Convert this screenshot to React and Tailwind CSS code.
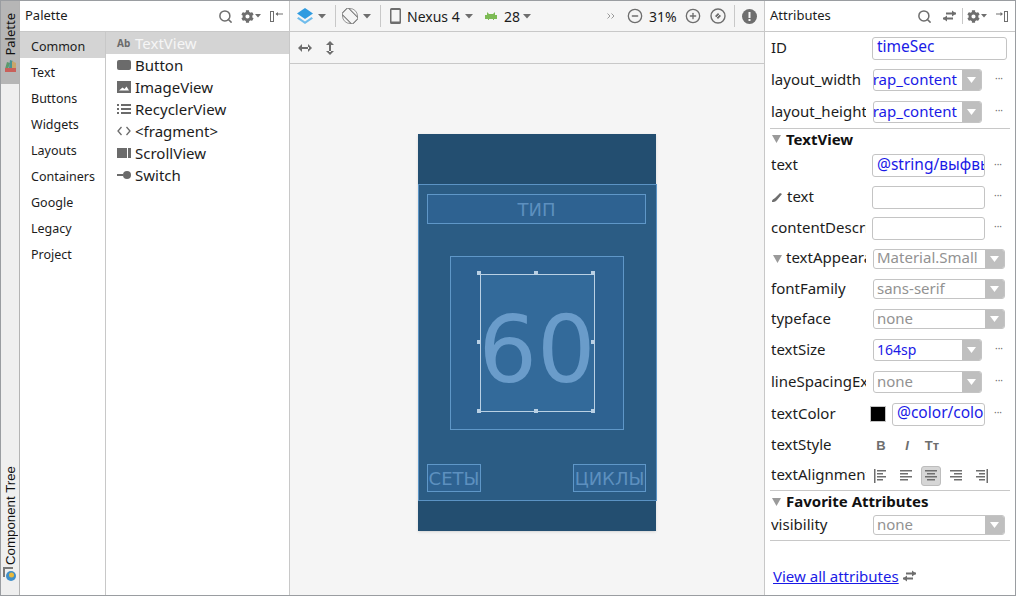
import React from 'react';
import { FaCog } from 'react-icons/fa';
import { Search, CircleMinus, CirclePlus } from 'lucide-react';

const ui = { fontFamily: '"Noto Sans", sans-serif' };

function Caret({ className = '' }) {
  return (
    <svg width="8" height="5" viewBox="0 0 8 5" className={className}>
      <path d="M0 0h8L4 4.500z" fill="#6e6e6e" />
    </svg>
  );
}

function Gear() {
  return (
    <span className="flex items-center gap-[1px]">
      <FaCog size={13} color="#6e6e6e" />
      <svg width="6" height="4" viewBox="0 0 6 4"><path d="M0 0h6L3 3.500z" fill="#6e6e6e" /></svg>
    </span>
  );
}

function SwapIcon() {
  return (
    <svg width="15" height="12" viewBox="0 0 15 12" fill="none" stroke="#6e6e6e" strokeWidth="2">
      <path d="M4 3.500h10M1 8.500h10" />
      <path d="M10 0.500v6l4-3zM5 5.500v6l-4-3z" fill="#6e6e6e" stroke="none" />
    </svg>
  );
}

function CategoryRow({ label, active }) {
  return (
    <div className={`h-[26px] pl-[11px] pt-[4px] flex items-center text-[12.5px] text-[#1c1c1c] ${active ? 'bg-[#d4d4d4]' : ''}`}>
      {label}
    </div>
  );
}

function PaletteIcon({ name }) {
  const fill = '#6b6b6b';
  if (name === 'text') return <span className="text-[10px] font-bold text-[#6b6b6b]">Ab</span>;
  if (name === 'button') return <svg width="14" height="11" viewBox="0 0 14 11"><rect width="14" height="10" rx="2" fill={fill} /></svg>;
  if (name === 'image') {
    return (
      <svg width="14" height="12" viewBox="0 0 14 12">
        <path fillRule="evenodd" d="M0 0h14v12H0zM2 9.500h10L9.500 5.500 7.500 8 5.500 6.500z" fill={fill} />
      </svg>
    );
  }
  if (name === 'list') {
    return (
      <svg width="14" height="10" viewBox="0 0 14 10" fill={fill}>
        <path d="M0 0h2v2H0zM4 0h10v2H4zM0 4h2v2H0zM4 4h10v2H4zM0 8h2v2H0zM4 8h10v2H4z" />
      </svg>
    );
  }
  if (name === 'code') {
    return (
      <svg width="14" height="10" viewBox="0 0 14 10" fill="none" stroke={fill} strokeWidth="1.300">
        <path d="M4.500 1 1 5l3.500 4M9.500 1 13 5 9.500 9" />
      </svg>
    );
  }
  if (name === 'scroll') {
    return (
      <svg width="14" height="10" viewBox="0 0 14 10" fill={fill}>
        <path d="M0 0h10v10H0zM11 0h3v10h-3z" />
      </svg>
    );
  }
  return (
    <svg width="14" height="8" viewBox="0 0 14 8" fill={fill}>
      <rect x="0" y="3" width="6" height="2" />
      <circle cx="10" cy="4" r="4" />
    </svg>
  );
}

function ItemRow({ icon, label, active }) {
  return (
    <div className={`h-[22px] flex items-center text-[15px] ${active ? 'bg-[#d4d4d4] text-[#f6f6f6]' : 'text-[#1c1c1c]'}`}>
      <span className="w-[29px] pl-[11px] flex items-center">
        <PaletteIcon name={icon} />
      </span>
      {label}
    </div>
  );
}

function LeftRail() {
  return (
    <div className="w-[19px] shrink-0 bg-[#efefef] border-r border-[#b4b4b4] flex flex-col justify-between">
      <div className="h-[83px] bg-[#b6b6b6] flex flex-col-reverse items-center justify-end pb-[11px]">
        <div className="flex flex-col-reverse items-center gap-[3px] h-full justify-start">
          <svg width="13" height="14" viewBox="0 0 13 14">
            <path d="M1 10 3 3l3 1-2 6z" fill="#5b9a6c" />
            <path d="M5 9 6 1l3 1 1 7z" fill="#3d8f8f" opacity="0.9" />
            <path d="M8 9V2l4 2v5z" fill="#c9a66b" />
            <rect x="1" y="9" width="11" height="4" fill="#c9605a" />
          </svg>
          <span className="[writing-mode:vertical-rl] rotate-180 text-[13px] text-[#111] leading-[19px]">Palette</span>
        </div>
      </div>
      <div className="flex flex-col items-center pb-[14px]">
        <span className="[writing-mode:vertical-rl] rotate-180 text-[13.300px] text-[#111] leading-[19px]" style={{ fontFamily: '"Liberation Sans", sans-serif' }}>
          Component Tree
        </span>
        <svg width="14" height="14" viewBox="0 0 14 14" className="mt-[2px]">
          <path d="M0 0h10v2H2v8H0z" fill="#7a7a7a" />
          <circle cx="8" cy="9" r="5" fill="#3f8fc9" />
          <circle cx="8.500" cy="8" r="2.500" fill="#e8b93c" />
        </svg>
      </div>
    </div>
  );
}

function PalettePanel() {
  const cats = ['Common', 'Text', 'Buttons', 'Widgets', 'Layouts', 'Containers', 'Google', 'Legacy', 'Project'];
  const items = [
    ['text', 'TextView'],
    ['button', 'Button'],
    ['image', 'ImageView'],
    ['list', 'RecyclerView'],
    ['code', '<fragment>'],
    ['scroll', 'ScrollView'],
    ['switch', 'Switch'],
  ];
  return (
    <div className="w-[270px] shrink-0 bg-white border-r border-[#c8c8c8] flex flex-col">
      <div className="h-[31px] shrink-0 border-b border-[#c8c8c8] flex items-center pl-[5px] text-[13px] text-[#1c1c1c]">
        <span>Palette</span>
        <span className="ml-auto flex items-center">
          <Search size={15} color="#6e6e6e" strokeWidth={2.400} />
          <span className="ml-[8px]"><Gear /></span>
          <svg width="13" height="13" viewBox="0 0 13 13" className="ml-[9px] mr-[6px]">
            <path d="M0 1h4v11H0zM1 2v9h2V2z" fill="#6e6e6e" />
            <path d="M6 3.500h7v1H6z" fill="#6e6e6e" />
            <path d="M5.500 4 8 2v4z" fill="#6e6e6e" />
          </svg>
        </span>
      </div>
      <div className="flex flex-1">
        <div className="w-[86px] border-r border-[#c8c8c8]">
          {cats.map((c, i) => <CategoryRow key={c} label={c} active={i === 0} />)}
        </div>
        <div className="flex-1">
          {items.map(([ic, l], i) => <ItemRow key={l} icon={ic} label={l} active={i === 0} />)}
        </div>
      </div>
    </div>
  );
}

function Sep({ className = '' }) {
  return <span className={`w-px h-[22px] bg-[#c8c8c8] ${className}`} />;
}

function Toolbar() {
  return (
    <div className="h-[31px] shrink-0 border-b border-[#c8c8c8] flex items-center text-[14px] text-[#1c1c1c] pl-[7px]">
      <svg width="16" height="16" viewBox="0 0 16 16">
        <path d="M8 0l8 5.500-8 5.500-8-5.500z" fill="#2f9be0" />
        <path d="M1.500 9 8 13.500 14.500 9 16 10.500 8 16 0 10.500z" fill="#6fbcec" />
      </svg>
      <Caret className="ml-[5px]" />
      <Sep className="ml-[9px]" />
      <svg width="16" height="16" viewBox="0 0 16 16" fill="none" stroke="#6e6e6e" className="ml-[6px]">
        <circle cx="8" cy="8" r="7.500" strokeWidth="0.700" />
        <rect x="3.500" y="0.500" width="9" height="15" rx="1" transform="rotate(-45 8 8)" fill="#f5f5f5" strokeWidth="1" />
      </svg>
      <Caret className="ml-[5px]" />
      <Sep className="ml-[9px]" />
      <svg width="11" height="16" viewBox="0 0 11 16" className="ml-[9px]">
        <path fillRule="evenodd" d="M1.500 0h8A1.500 1.500 0 0 1 11 1.500v13A1.500 1.500 0 0 1 9.500 16h-8A1.500 1.500 0 0 1 0 14.500v-13A1.500 1.500 0 0 1 1.500 0zM1.500 2v11.500h8V2z" fill="#6e6e6e" />
      </svg>
      <span className="ml-[6px] w-[54px]">Nexus 4</span>
      <Caret className="ml-[4px]" />
      <svg width="12" height="8" viewBox="0 0 12 8" className="ml-[12px]">
        <path d="M0 3h12v4H9v1H8V7H4v1H3V7H0zM2 0l2 2h4l2-2v3H2z" fill="#7dbb55" />
      </svg>
      <span className="ml-[7px] w-[15px]">28</span>
      <Caret className="ml-[4px]" />
      <svg width="8" height="6" viewBox="0 0 8 6" fill="none" stroke="#9a9a9a" className="ml-[76px]">
        <path d="M0.500 0.500 3 3 0.500 5.500M4.500 0.500 7 3 4.500 5.500" />
      </svg>
      <CircleMinus size={16} color="#6e6e6e" strokeWidth={2} className="ml-[12px]" />
      <span className="ml-[6px] w-[29px]">31%</span>
      <CirclePlus size={16} color="#6e6e6e" strokeWidth={2} className="ml-[7px]" />
      <svg width="16" height="16" viewBox="0 0 16 16" className="ml-[9px]" fill="none">
        <circle cx="8" cy="8" r="7" stroke="#6e6e6e" strokeWidth="1.400" />
        <path d="M5 8 8 5l3 3-3 3z" fill="#6e6e6e" />
        <path d="M6 10 10 6" stroke="#f5f5f5" strokeWidth="0.800" />
      </svg>
      <Sep className="ml-[8px]" />
      <svg width="15" height="15" viewBox="0 0 15 15" className="ml-[7px]">
        <circle cx="7.500" cy="7.500" r="7.500" fill="#6e6e6e" />
        <path d="M6.500 3h2v6h-2zM6.500 10h2v2h-2z" fill="#f5f5f5" />
      </svg>
    </div>
  );
}

function Handle({ className }) {
  return <span className={`absolute w-[4px] h-[4px] bg-[#b9d0e4] ${className}`} />;
}

function Device() {
  const android = { fontFamily: '"DejaVu Sans", sans-serif' };
  return (
    <div className="w-[238px] h-[397px] flex flex-col shadow-sm" style={android}>
      <div className="h-[50px] bg-[#234e70]" />
      <div className="w-[239px] h-[317px] bg-[#2b5c84] border border-[#5b93c4] pt-[9px] pl-[8px] pr-[10px]">
        <div className="h-[30px] bg-[#2e6291] border border-[#5f97c8] flex items-center justify-center text-[18px] text-[#5d90bf]">
          ТИП
        </div>
        <div className="mt-[32px] ml-[23px] w-[174px] h-[174px] bg-[#2e6291] border border-[#5f97c8] flex items-center justify-center">
          <div className="relative w-[115px] h-[138px] pt-[16px] bg-[#336a9a] border border-[#b9d0e4] flex items-center justify-center text-[92px] leading-none text-[#6a9cca]">
            60
            <Handle className="left-[-4px] top-[-4px]" />
            <Handle className="left-[53px] top-[-4px]" />
            <Handle className="left-[110px] top-[-4px]" />
            <Handle className="left-[-4px] top-[65px]" />
            <Handle className="left-[110px] top-[65px]" />
            <Handle className="left-[-4px] top-[134px]" />
            <Handle className="left-[53px] top-[134px]" />
            <Handle className="left-[110px] top-[134px]" />
          </div>
        </div>
        <div className="mt-[34px] flex justify-between text-[18px] text-[#5d90bf]">
          <div className="w-[54px] h-[28px] bg-[#2e6291] border border-[#5f97c8] flex items-center justify-center">СЕТЫ</div>
          <div className="w-[73px] h-[28px] bg-[#2e6291] border border-[#5f97c8] flex items-center justify-center">ЦИКЛЫ</div>
        </div>
      </div>
      <div className="h-[30px] bg-[#234e70]" />
    </div>
  );
}

function CenterPanel() {
  return (
    <div className="w-[475px] shrink-0 bg-[#f5f5f5] border-r border-[#c8c8c8] flex flex-col">
      <Toolbar />
      <div className="h-[32px] shrink-0 border-b border-[#c8c8c8] flex items-center pl-[8px]">
        <svg width="14" height="8" viewBox="0 0 14 8">
          <path d="M3 3h8v2H3zM0 4l4-4v8zM14 4l-4-4v8z" fill="#6e6e6e" />
        </svg>
        <svg width="8" height="14" viewBox="0 0 8 14" className="ml-[14px]">
          <path d="M3 3h2v8H3zM4 0l4 4H0zM4 14l4-4H0z" fill="#6e6e6e" />
        </svg>
      </div>
      <div className="flex-1 pt-[70px] pl-[128px]">
        <Device />
      </div>
    </div>
  );
}

function Dots({ className = '' }) {
  return <span className={`text-[10px] leading-none text-[#6e6e6e] -mt-[4px] ${className}`}>···</span>;
}

function Row({ h, label, children }) {
  return (
    <div className={`${h} flex items-center pl-[6px]`}>
      <div className="w-[101px] shrink-0 flex items-center pb-[2px] text-[15px] text-[#1c1c1c]">
        {label}
      </div>
      <div className="flex items-center flex-1">{children}</div>
    </div>
  );
}

function Label({ text }) {
  return <span className="block w-[95px] overflow-hidden whitespace-nowrap">{text}</span>;
}

function Field({ w, value, h = 'h-[23px]' }) {
  return (
    <div className={`${w} ${h} border border-[#c4c4c4] rounded-[3px] bg-white pl-[4px] pr-px flex items-center overflow-hidden whitespace-nowrap text-[15.500px] text-[#1a1ae6]`}>
      <span className="pb-[2px]">{value}</span>
    </div>
  );
}

function Select({ w, h, value, blue, clip, small }) {
  return (
    <div className={`${w} ${h} ml-px border border-[#c4c4c4] rounded-[3px] bg-white flex items-stretch overflow-hidden ${small ? 'text-[14px]' : 'text-[15px]'} ${blue ? 'text-[#1a1ae6]' : 'text-[#929292]'}`}>
      <div className={`flex-1 min-w-0 overflow-hidden whitespace-nowrap flex items-center pb-[2px] ${clip ? 'justify-end pr-[5px]' : 'pl-[3px]'}`}>
        {value}
      </div>
      <div className="w-[19px] shrink-0 bg-[#bfbfbf] flex items-center justify-center">
        <svg width="9" height="6" viewBox="0 0 9 6"><path d="M0 0h9L4.500 6z" fill="#fff" /></svg>
      </div>
    </div>
  );
}

function Section({ h, title }) {
  return (
    <div className={`${h} flex items-center pl-[7px] pb-[1px] text-[15px] font-bold text-[#111]`}>
      <svg width="9" height="8" viewBox="0 0 9 8" className="mr-[5px]"><path d="M0 0h9L4.500 8z" fill="#9a9a9a" /></svg>
      {title}
    </div>
  );
}

function AlignIcon({ lines, bar }) {
  return (
    <svg width="12" height="14" viewBox="0 0 12 14" fill="#6e6e6e">
      {lines.map(([x, w], i) => <rect key={i} x={x} y={i * 3 + 1} width={w} height="1.500" />)}
      {bar === 'l' && <rect x="0" y="0" width="1.500" height="14" />}
      {bar === 'r' && <rect x="10.500" y="0" width="1.500" height="14" />}
    </svg>
  );
}

function AttributesPanel() {
  return (
    <div className="flex-1 bg-white flex flex-col">
      <div className="h-[31px] shrink-0 border-b border-[#c8c8c8] flex items-center pl-[5px] text-[13px] text-[#1c1c1c]">
        <span>Attributes</span>
        <span className="ml-auto flex items-center">
          <Search size={15} color="#6e6e6e" strokeWidth={2.400} />
          <span className="ml-[10px]"><SwapIcon /></span>
          <span className="w-px h-[16px] bg-[#c8c8c8] ml-[5px]" />
          <span className="ml-[4px]"><Gear /></span>
          <svg width="12" height="13" viewBox="0 0 12 13" className="ml-[9px] mr-[7px]">
            <path d="M8 1h4v11H8zM9 2v9h2V2z" fill="#6e6e6e" />
            <path d="M0 3.500h6v1H0z" fill="#6e6e6e" />
            <path d="M7 4 4.500 2v4z" fill="#6e6e6e" />
          </svg>
        </span>
      </div>

      <Row h="h-[32px]" label={<Label text="ID" />}>
        <Field w="w-[135px]" value="timeSec" />
      </Row>
      <Row h="h-[32px]" label={<Label text="layout_width" />}>
        <Select w="w-[109px]" h="h-[22px]" value="wrap_content" blue clip />
        <Dots className="ml-[13px]" />
      </Row>
      <Row h="h-[32px]" label={<Label text="layout_height" />}>
        <Select w="w-[109px]" h="h-[22px]" value="wrap_content" blue clip />
        <Dots className="ml-[13px]" />
      </Row>
      <div className="h-px mx-[5px] bg-[#c8c8c8]" />
      <Section h="h-[21px]" title="TextView" />
      <Row h="h-[31px]" label={<Label text="text" />}>
        <Field w="w-[113px]" value="@string/выфвыф" />
        <Dots className="ml-[9px]" />
      </Row>
      <Row
        h="h-[32px]"
        label={
          <span className="flex items-center">
            <svg width="11" height="10" viewBox="0 0 11 10" className="ml-px mr-[4px] mt-[2px]"><path d="M0 10c0-3 2-3 3-4l5-5 2 1-5 6c-2 2-3 2-5 2z" fill="#6e6e6e" /></svg>
            text
          </span>
        }
      >
        <Field w="w-[113px]" value="" />
        <Dots className="ml-[9px]" />
      </Row>
      <Row h="h-[30px]" label={<Label text="contentDescription" />}>
        <Field w="w-[113px]" value="" />
        <Dots className="ml-[9px]" />
      </Row>
      <Row
        h="h-[31px]"
        label={
          <span className="flex items-center w-[95px] overflow-hidden whitespace-nowrap">
            <svg width="9" height="8" viewBox="0 0 9 8" className="ml-[2px] mr-[4px] mt-[2px] shrink-0"><path d="M0 0h9L4.500 8z" fill="#9a9a9a" /></svg>
            textAppearance
          </span>
        }
      >
        <Select w="w-[132px]" h="h-[20px]" value="Material.Small" />
      </Row>
      <Row h="h-[30px]" label={<Label text="fontFamily" />}>
        <Select w="w-[132px]" h="h-[20px]" value="sans-serif" />
      </Row>
      <Row h="h-[30px]" label={<Label text="typeface" />}>
        <Select w="w-[132px]" h="h-[20px]" value="none" />
      </Row>
      <Row h="h-[32px]" label={<Label text="textSize" />}>
        <Select w="w-[109px]" h="h-[22px]" value="164sp" blue small />
        <Dots className="ml-[13px]" />
      </Row>
      <Row h="h-[32px]" label={<Label text="lineSpacingExtra" />}>
        <Select w="w-[109px]" h="h-[22px]" value="none" />
        <Dots className="ml-[13px]" />
      </Row>
      <Row h="h-[32px]" label={<Label text="textColor" />}>
        <span className="w-[16px] h-[16px] bg-black border border-[#c4c4c4] -ml-[2px] mr-[6px]" />
        <Field w="w-[93px]" value="@color/colorAccent" />
        <Dots className="ml-[9px]" />
      </Row>
      <Row h="h-[31px]" label={<Label text="textStyle" />}>
        <span className="w-[16px] ml-[1px] text-center text-[13px] font-bold text-[#6e6e6e]" style={{ fontFamily: '"Liberation Sans", sans-serif' }}>B</span>
        <span className="w-[16px] ml-[10px] text-center text-[13px] font-bold italic text-[#6e6e6e]" style={{ fontFamily: '"Liberation Sans", sans-serif' }}>I</span>
        <span className="w-[16px] ml-[9px] text-center text-[13px] font-bold text-[#6e6e6e]" style={{ fontFamily: '"Liberation Sans", sans-serif' }}>Tт</span>
      </Row>
      <Row h="h-[29px]" label={<Label text="textAlignment" />}>
        <span className="ml-[2px]"><AlignIcon lines={[[3, 9], [3, 6], [3, 9], [3, 6]]} bar="l" /></span>
        <span className="ml-[14px]"><AlignIcon lines={[[0, 12], [0, 8], [0, 12], [0, 8]]} /></span>
        <span className="ml-[9px] w-[20px] h-[20px] bg-[#d6d6d6] border border-[#bdbdbd] rounded-[3px] flex items-center justify-center">
          <AlignIcon lines={[[0, 12], [2, 8], [0, 12], [2, 8]]} />
        </span>
        <span className="ml-[9px]"><AlignIcon lines={[[0, 12], [4, 8], [0, 12], [4, 8]]} /></span>
        <span className="ml-[14px]"><AlignIcon lines={[[0, 9], [3, 6], [0, 9], [3, 6]]} bar="r" /></span>
      </Row>
      <div className="h-px mx-[5px] bg-[#c8c8c8]" />
      <Section h="h-[22px]" title="Favorite Attributes" />
      <Row h="h-[24px]" label={<Label text="visibility" />}>
        <Select w="w-[132px]" h="h-[20px]" value="none" />
      </Row>
      <div className="h-px mx-[5px] mt-[3px] bg-[#c8c8c8]" />
      <div className="mt-[24px] pl-[8px] flex items-center text-[15px]">
        <span className="text-[#1a1ae6] underline">View all attributes</span>
        <span className="ml-[3px]"><SwapIcon /></span>
      </div>
    </div>
  );
}

export default function App() {
  return (
    <div className="w-[1016px] h-[596px] overflow-hidden border border-[#9a9da1] flex bg-white" style={ui}>
      <LeftRail />
      <PalettePanel />
      <CenterPanel />
      <AttributesPanel />
    </div>
  );
}
